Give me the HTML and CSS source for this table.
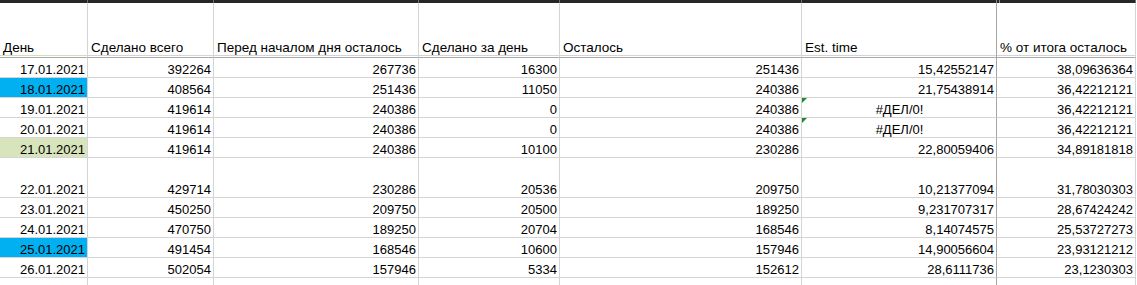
FILE: index.html
```html
<!DOCTYPE html>
<html lang="ru">
<head>
<meta charset="utf-8">
<title>Sheet</title>
<link rel="stylesheet" href="styles.css">
</head>
<body>
<div class="sheet">
  <div class="row topbar">
    <div class="c"></div><div class="c"></div><div class="c"></div><div class="c"></div><div class="c"></div><div class="c fz"></div><div class="c g"></div>
  </div>
  <div class="row head">
    <div class="c first">День</div>
    <div class="c">Сделано всего</div>
    <div class="c">Перед началом дня осталось</div>
    <div class="c">Сделано за день</div>
    <div class="c">Осталось</div>
    <div class="c fz">Est. time</div>
    <div class="c">% от итога осталось</div>
  </div>
  <div class="row">
    <div class="c r">17.01.2021</div><div class="c r">392264</div><div class="c r">267736</div><div class="c r">16300</div><div class="c r">251436</div><div class="c r fz">15,42552147</div><div class="c r">38,09636364</div>
  </div>
  <div class="row">
    <div class="c r blue">18.01.2021</div><div class="c r">408564</div><div class="c r">251436</div><div class="c r">11050</div><div class="c r">240386</div><div class="c r fz">21,75438914</div><div class="c r">36,42212121</div>
  </div>
  <div class="row">
    <div class="c r">19.01.2021</div><div class="c r">419614</div><div class="c r">240386</div><div class="c r">0</div><div class="c r">240386</div><div class="c ctr fz err">#ДЕЛ/0!</div><div class="c r">36,42212121</div>
  </div>
  <div class="row">
    <div class="c r">20.01.2021</div><div class="c r">419614</div><div class="c r">240386</div><div class="c r">0</div><div class="c r">240386</div><div class="c ctr fz err">#ДЕЛ/0!</div><div class="c r">36,42212121</div>
  </div>
  <div class="row">
    <div class="c r green">21.01.2021</div><div class="c r">419614</div><div class="c r">240386</div><div class="c r">10100</div><div class="c r">230286</div><div class="c r fz">22,80059406</div><div class="c r">34,89181818</div>
  </div>
  <div class="row tall">
    <div class="c r">22.01.2021</div><div class="c r">429714</div><div class="c r">230286</div><div class="c r">20536</div><div class="c r">209750</div><div class="c r fz">10,21377094</div><div class="c r">31,78030303</div>
  </div>
  <div class="row">
    <div class="c r">23.01.2021</div><div class="c r">450250</div><div class="c r">209750</div><div class="c r">20500</div><div class="c r">189250</div><div class="c r fz">9,231707317</div><div class="c r">28,67424242</div>
  </div>
  <div class="row">
    <div class="c r">24.01.2021</div><div class="c r">470750</div><div class="c r">189250</div><div class="c r">20704</div><div class="c r">168546</div><div class="c r fz">8,14074575</div><div class="c r">25,53727273</div>
  </div>
  <div class="row">
    <div class="c r blue">25.01.2021</div><div class="c r">491454</div><div class="c r">168546</div><div class="c r">10600</div><div class="c r">157946</div><div class="c r fz">14,90056604</div><div class="c r">23,93121212</div>
  </div>
  <div class="row">
    <div class="c r">26.01.2021</div><div class="c r">502054</div><div class="c r">157946</div><div class="c r">5334</div><div class="c r">152612</div><div class="c r fz">28,6111736</div><div class="c r">23,1230303</div>
  </div>
  <div class="row">
    <div class="c"></div><div class="c"></div><div class="c"></div><div class="c"></div><div class="c"></div><div class="c fz"></div><div class="c"></div>
  </div>
</div>
</body>
</html>
```
FILE: styles.css
```css
html, body {
  margin: 0;
  padding: 0;
  background: #ffffff;
}
body {
  font-family: "Liberation Sans", Arial, sans-serif;
  font-size: 13px;
  color: #000000;
  overflow: hidden;
}
.sheet {
  width: 1136px;
}
.row {
  display: grid;
  grid-template-columns: 88px 126px 205px 141px 242px 195px 139px;
  height: 20px;
}
.c {
  box-sizing: border-box;
  border-right: 1px solid #d4d4d4;
  border-bottom: 1px solid #d4d4d4;
  display: flex;
  align-items: flex-end;
  padding: 0 2px 0 3px;
  white-space: nowrap;
  overflow: hidden;
  position: relative;
}
.c.fz {
  border-right-color: #a6a6a6;
}
.r {
  justify-content: flex-end;
}
.ctr {
  justify-content: center;
}
.topbar {
  height: 3px;
  background: #262626;
}
.topbar .c {
  border-bottom: none;
  border-right-color: #6e6e6e;
}
.topbar .c.fz {
  border-right-color: #8a8a8a;
}
.topbar .c.g {
  box-shadow: inset 2px 0 0 #262626, inset 3px 0 0 #8a8a8a;
}
.head {
  height: 55px;
  font-size: 13.5px;
}
.head .c {
  padding-bottom: 2px;
  border-bottom: 1px solid #a9a9a9;
  box-shadow: inset 0 -1px 0 #ffffff, inset 0 -2px 0 #d4d4d4;
}
.head .c.first {
  box-shadow: inset 0 -1px 0 #ffffff, inset 0 -2px 0 #cfe2b6;
}
.tall {
  height: 40px;
}
.blue {
  background: #00b0f0;
}
.green {
  background: #d8e4bc;
}
.err::before {
  content: "";
  position: absolute;
  left: 0;
  top: 0;
  width: 0;
  height: 0;
  border-top: 5px solid #1d8a2c;
  border-right: 5px solid transparent;
}
```
